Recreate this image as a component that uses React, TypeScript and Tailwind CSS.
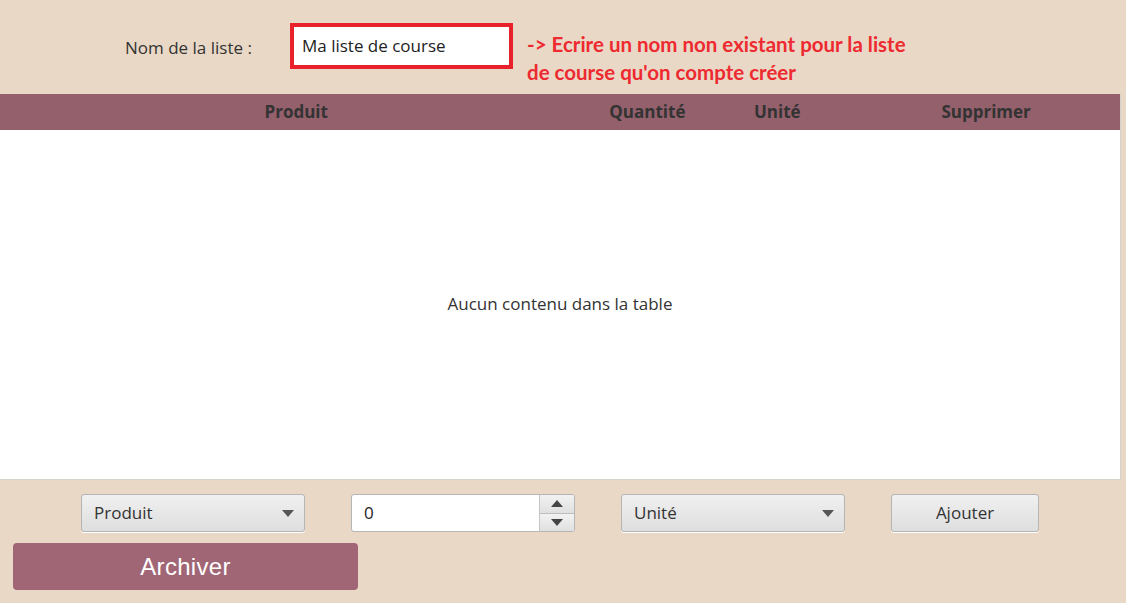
import React from 'react';

const font = { fontFamily: '"Open Sans", "Noto Sans", sans-serif' };

function Caret() {
	return (
		<svg width="12" height="7" viewBox="0 0 12 7" className="fill-[#555]">
			<path d="M0 0 L12 0 L6 7 Z" />
		</svg>
	);
}

function Select({ label, width }: { label: string; width: string }) {
	return (
		<div
			className={`${width} h-[38px] flex items-center justify-between pl-3 pr-[10px] rounded-[3px] border border-[#b5b5b5] bg-gradient-to-b from-[#f0f0f0] to-[#dedede] text-[17px] text-[#333] shadow-[0_1px_0_#fff]`}>
			<span>{label}</span>
			<Caret />
		</div>
	);
}

export default function App() {
	return (
		<div className="w-[1126px] h-[603px] bg-[#e9d8c6] flex flex-col overflow-hidden" style={font}>
			<div className="h-[94px] flex items-start">
				<span className="ml-[125px] mt-[35px] w-[165px] text-[17px] text-[#333]">Nom de la liste :</span>
				<div className="mt-[23px] w-[223px] h-[46px] border-4 border-[#e8212b] bg-white flex items-center pl-[8px] text-[17px] text-[#222]">
					Ma liste de course
				</div>
				<div
					className="ml-[14px] mt-[30px] text-[20.5px] leading-[28px] font-bold text-[#ee2a31]"
					style={{ fontFamily: 'Lato, "Noto Sans", sans-serif' }}>
					<div>-&gt; Ecrire un nom non existant pour la liste</div>
					<div>de course qu'on compte créer</div>
				</div>
			</div>

			<div className="w-[1121px] h-[386px] flex flex-col border-r border-b border-[#d6d2cc]">
				<div className="h-[36px] bg-[#93606c] flex items-center text-[17px] font-bold text-[#333]">
					<div className="w-[593px] text-center">Produit</div>
					<div className="w-[110px] text-center">Quantité</div>
					<div className="w-[150px] text-center">Unité</div>
					<div className="w-[268px] text-center">Supprimer</div>
				</div>
				<div className="flex-1 bg-white flex items-center justify-center text-[17px] text-[#333] pb-[2px]">
					Aucun contenu dans la table
				</div>
			</div>

			<div className="mt-[14px] flex items-center">
				<div className="ml-[81px]">
					<Select label="Produit" width="w-[224px]" />
				</div>
				<div className="ml-[46px] w-[224px] h-[38px] flex rounded-[3px] border border-[#b5b5b5] bg-white overflow-hidden">
					<div className="flex-1 flex items-center pl-[12px] text-[17px] text-[#222]">0</div>
					<div className="w-[35px] flex flex-col border-l border-[#c4c4c4]">
						<div className="flex-1 flex items-center justify-center bg-gradient-to-b from-[#f2f2f2] to-[#e0e0e0] border-b border-[#bdbdbd]">
							<svg width="12" height="7" viewBox="0 0 12 7" className="fill-[#444]">
								<path d="M0 7 L12 7 L6 0 Z" />
							</svg>
						</div>
						<div className="flex-1 flex items-center justify-center bg-gradient-to-b from-[#f2f2f2] to-[#e0e0e0]">
							<svg width="12" height="7" viewBox="0 0 12 7" className="fill-[#444]">
								<path d="M0 0 L12 0 L6 7 Z" />
							</svg>
						</div>
					</div>
				</div>
				<div className="ml-[46px]">
					<Select label="Unité" width="w-[224px]" />
				</div>
				<button className="ml-[46px] w-[148px] h-[38px] rounded-[3px] border border-[#b5b5b5] bg-gradient-to-b from-[#f0f0f0] to-[#dedede] text-[17px] text-[#333] shadow-[0_1px_0_#fff]">
					Ajouter
				</button>
			</div>

			<button
				className="ml-[13px] mt-[11px] w-[345px] h-[47px] rounded-[4px] bg-[#a06676] text-white text-[24px] tracking-[0.3px]"
				style={{ fontFamily: '"Liberation Sans", Arial, sans-serif' }}>
				Archiver
			</button>
		</div>
	);
}
